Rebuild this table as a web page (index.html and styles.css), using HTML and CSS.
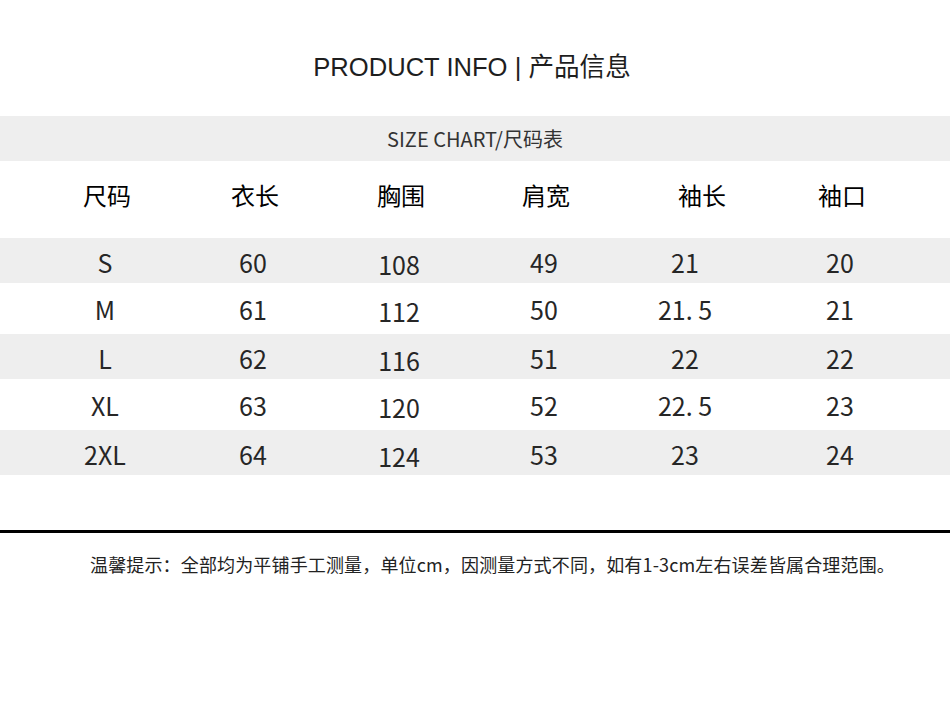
FILE: index.html
```html
<!DOCTYPE html>
<html lang="zh-CN">
<head>
<meta charset="utf-8">
<title>PRODUCT INFO</title>
<link rel="stylesheet" href="styles.css">
</head>
<body>
<div class="page">
  <h1 class="title">PRODUCT INFO | 产品信息</h1>
  <div class="band">SIZE CHART/尺码表</div>
  <div class="row head">
    <div>尺码</div><div>衣长</div><div>胸围</div><div>肩宽</div><div class="shift">袖长</div><div>袖口</div>
  </div>
  <div class="row data gray">
    <div>S</div><div>60</div><div class="low">108</div><div>49</div><div>21</div><div>20</div>
  </div>
  <div class="row data tall">
    <div>M</div><div>61</div><div class="low">112</div><div>50</div><div>21. 5</div><div>21</div>
  </div>
  <div class="row data gray">
    <div>L</div><div>62</div><div class="low">116</div><div>51</div><div>22</div><div>22</div>
  </div>
  <div class="row data tall">
    <div>XL</div><div>63</div><div class="low">120</div><div>52</div><div>22. 5</div><div>23</div>
  </div>
  <div class="row data gray">
    <div>2XL</div><div>64</div><div class="low">124</div><div>53</div><div>23</div><div>24</div>
  </div>
  <div class="spacer"></div>
  <p class="note">温馨提示：全部均为平铺手工测量，单位cm，因测量方式不同，如有1-3cm左右误差皆属合理范围。</p>
</div>
</body>
</html>
```
FILE: styles.css
```css
html, body {
  margin: 0;
  padding: 0;
  background: #ffffff;
}

.page {
  width: 950px;
  font-family: "Noto Sans CJK SC", "Noto Sans", sans-serif;
  color: #222222;
}

.title {
  margin: 0;
  height: 116px;
  box-sizing: border-box;
  padding-top: 52px;
  padding-right: 6px;
  font-family: "Liberation Sans", "Noto Sans CJK SC", sans-serif;
  font-weight: normal;
  font-size: 25.6px;
  line-height: 30px;
  text-align: center;
  color: #1e1e1e;
}

.band {
  height: 45px;
  line-height: 45px;
  background: #eeeeee;
  text-align: center;
  font-size: 20px;
  color: #333333;
}

.row {
  display: grid;
  grid-template-columns: 150px 146px 146px 144px 138px 172px;
  padding-left: 30px;
  align-items: center;
  justify-items: center;
  box-sizing: border-box;
}

.row > div {
  line-height: 30px;
  white-space: pre;
}

.head {
  height: 77px;
  padding-left: 32px;
  padding-bottom: 10px;
  font-size: 24px;
  color: #000000;
}

.head .shift {
  padding-left: 30px;
}

.data {
  font-size: 25px;
  color: #262626;
}

.gray {
  height: 45px;
  padding-top: 3px;
  background: #eeeeee;
}

.tall {
  height: 51px;
}

.data .low {
  padding-top: 4px;
}

.spacer {
  height: 55px;
  border-bottom: 3px solid #000000;
}

.note {
  margin: 0;
  padding: 16px 0 0 90px;
  font-size: 18px;
  letter-spacing: 0.15px;
  line-height: 30px;
  color: #222222;
  white-space: nowrap;
}
```
